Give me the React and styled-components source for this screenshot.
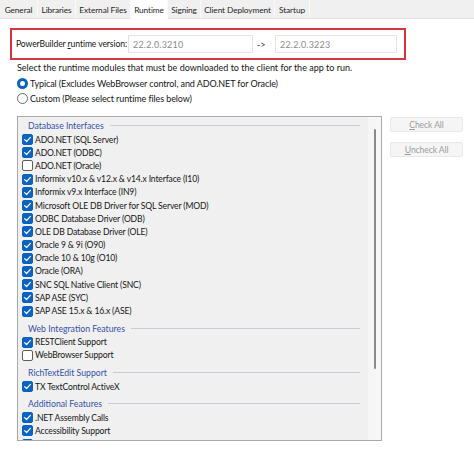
import React from "react";
import styled, { createGlobalStyle } from "styled-components";

const Global = createGlobalStyle`
  html, body { margin: 0; padding: 0; background: #ffffff; }
  body {
    font-family: Lato, "Liberation Sans", sans-serif;
    font-size: 9px;
    color: #161616;
    width: 474px;
    height: 458px;
    overflow: hidden;
  }
  * { box-sizing: border-box; }
`;

const TabBar = styled.div`
  display: flex;
  height: 19px;
  background: #f0f0f0;
  border-bottom: 1px solid #e3e3e3;
`;

const Tab = styled.div`
  width: ${(p) => p.$w}px;
  height: ${(p) => (p.$active ? 19 : 18)}px;
  display: flex;
  align-items: center;
  justify-content: center;
  padding-top: 1px;
  background: ${(p) => (p.$active ? "#ffffff" : "transparent")};
  border-right: 1px solid #fafafa;
  color: #1e1e1e;
  white-space: nowrap;
  font-size: 8.3px;
  letter-spacing: -0.1px;
`;

const Body = styled.div`
  padding-left: 17px;
`;

const Highlight = styled.div`
  margin: 9px 0 0 -7px;
  width: 396px;
  height: 32px;
  border: 2px solid #d6353b;
  display: flex;
  align-items: center;
  padding-left: 4px;
`;

const VersionLabel = styled.span`
  width: 112px;
  white-space: nowrap;
  font-size: 8.6px;
  letter-spacing: -0.1px;
`;

const U = styled.span`
  text-decoration: underline;
`;

const VersionInput = styled.div`
  width: ${(p) => p.$w}px;
  height: 18px;
  border: 1px solid #e4e4e4;
  display: flex;
  align-items: center;
  padding-left: 4px;
  color: #8c8c8c;
  letter-spacing: 0.2px;
`;

const Arrow = styled.span`
  width: 22px;
  padding-left: 4px;
  color: #333;
`;

const Description = styled.div`
  margin-top: 2px;
  line-height: 12px;
  white-space: nowrap;
`;

const RadioGroup = styled.div`
  margin-top: 2px;
`;

const RadioRow = styled.div`
  height: 15px;
  display: flex;
  align-items: center;
  gap: 2px;
  white-space: nowrap;
  letter-spacing: -0.1px;
`;

const RadioDot = styled.span`
  width: 11px;
  height: 11px;
  border-radius: 50%;
  flex: none;
  background: #ffffff;
  border: ${(p) => (p.$on ? "3px solid #0a62c2" : "1px solid #6b6b6b")};
`;

const ListRow = styled.div`
  margin-top: 10px;
  display: flex;
  align-items: flex-start;
`;

const ListBox = styled.div`
  width: 365px;
  height: 325px;
  border: 1px solid #a9a9a9;
  background: #f0f0f0;
  display: flex;
  overflow: hidden;
`;

const ListContent = styled.div`
  flex: 1;
  padding: 0 8px 0 4px;
  overflow: hidden;
`;

const Scrollbar = styled.div`
  width: 13px;
  background: #f6f6f6;
  display: flex;
  justify-content: center;
  padding-top: 12px;
`;

const Thumb = styled.div`
  width: 2px;
  height: 240px;
  background: #8a8a8a;
  border-radius: 1px;
`;

const HeaderRow = styled.div`
  height: 16px;
  margin-top: ${(p) => (p.$first ? 0 : 2)}px;
  display: flex;
  align-items: center;
  padding-left: 6px;
  padding-top: 1px;
`;

const HeaderText = styled.span`
  color: #3352a8;
  white-space: nowrap;
  font-size: 8.7px;
`;

const HeaderLine = styled.span`
  flex: 1;
  height: 1px;
  background: #c8ccd3;
  margin-left: 6px;
`;

const ItemRow = styled.div`
  height: 13.2px;
  display: flex;
  align-items: center;
  gap: 2px;
  white-space: nowrap;
  font-size: 8.6px;
  letter-spacing: -0.15px;
`;

const Box = styled.span`
  width: 11px;
  height: 11px;
  flex: none;
  border-radius: 2px;
  display: flex;
  align-items: center;
  justify-content: center;
  background: ${(p) => (p.$on ? "#0a62c2" : "#ffffff")};
  border: 1px solid ${(p) => (p.$on ? "#0a62c2" : "#5e5e5e")};
`;

const Buttons = styled.div`
  margin-left: 8px;
  display: flex;
  flex-direction: column;
  gap: 10px;
  padding-top: 1px;
`;

const Button = styled.div`
  width: 73px;
  height: 15px;
  background: #f5f5f5;
  border: 1px solid #e8e8e8;
  border-radius: 2px;
  display: flex;
  align-items: center;
  justify-content: center;
  color: #9c9c9c;
  font-size: 8.6px;
  letter-spacing: -0.1px;
`;

const tabs = [
  ["General", 38],
  ["Libraries", 38],
  ["External Files", 55],
  ["Runtime", 37, true],
  ["Signing", 33],
  ["Client Deployment", 74],
  ["Startup", 35],
];

const list = [
  { h: "Database Interfaces" },
  { t: "ADO.NET (SQL Server)", c: true },
  { t: "ADO.NET (ODBC)", c: true },
  { t: "ADO.NET (Oracle)", c: false },
  { t: "Informix v10.x & v12.x & v14.x Interface (I10)", c: true },
  { t: "Informix v9.x Interface (IN9)", c: true },
  { t: "Microsoft OLE DB Driver for SQL Server (MOD)", c: true },
  { t: "ODBC Database Driver (ODB)", c: true },
  { t: "OLE DB Database Driver (OLE)", c: true },
  { t: "Oracle 9 & 9i (O90)", c: true },
  { t: "Oracle 10 & 10g (O10)", c: true },
  { t: "Oracle (ORA)", c: true },
  { t: "SNC SQL Native Client (SNC)", c: true },
  { t: "SAP ASE (SYC)", c: true },
  { t: "SAP ASE 15.x & 16.x (ASE)", c: true },
  { h: "Web Integration Features" },
  { t: "RESTClient Support", c: true },
  { t: "WebBrowser Support", c: false },
  { h: "RichTextEdit Support" },
  { t: "TX TextControl ActiveX", c: true },
  { h: "Additional Features" },
  { t: ".NET Assembly Calls", c: true },
  { t: "Accessibility Support", c: true },
  { t: "", c: true },
];

const Check = () => (
  <svg width="9" height="9" viewBox="0 0 9 9">
    <path d="M1.6 4.6 L3.6 6.5 L7.4 2.4" fill="none" stroke="#fff" strokeWidth="1.2" strokeLinecap="round" strokeLinejoin="round" />
  </svg>
);

export default function App() {
  return (
    <>
      <Global />
      <TabBar>
        {tabs.map(([n, w, a]) => (
          <Tab key={n} $w={w} $active={a}>{n}</Tab>
        ))}
      </TabBar>
      <Body>
        <Highlight>
          <VersionLabel>PowerBuilder <U>r</U>untime version:</VersionLabel>
          <VersionInput $w={125}>22.2.0.3210</VersionInput>
          <Arrow>-&gt;</Arrow>
          <VersionInput $w={122}>22.2.0.3223</VersionInput>
        </Highlight>
        <Description>Select the runtime modules that must be downloaded to the client for the app to run.</Description>
        <RadioGroup>
          <RadioRow><RadioDot $on />Typical (Excludes WebBrowser control, and ADO.NET for Oracle)</RadioRow>
          <RadioRow><RadioDot />Custom (Please select runtime files below)</RadioRow>
        </RadioGroup>
        <ListRow>
          <ListBox>
            <ListContent>
              {list.map((it, i) =>
                it.h ? (
                  <HeaderRow key={i} $first={i === 0}>
                    <HeaderText>{it.h}</HeaderText>
                    <HeaderLine />
                  </HeaderRow>
                ) : (
                  <ItemRow key={i}>
                    <Box $on={it.c}>{it.c && <Check />}</Box>
                    {it.t}
                  </ItemRow>
                )
              )}
            </ListContent>
            <Scrollbar><Thumb /></Scrollbar>
          </ListBox>
          <Buttons>
            <Button><U>C</U>heck All</Button>
            <Button><U>U</U>ncheck All</Button>
          </Buttons>
        </ListRow>
      </Body>
    </>
  );
}
